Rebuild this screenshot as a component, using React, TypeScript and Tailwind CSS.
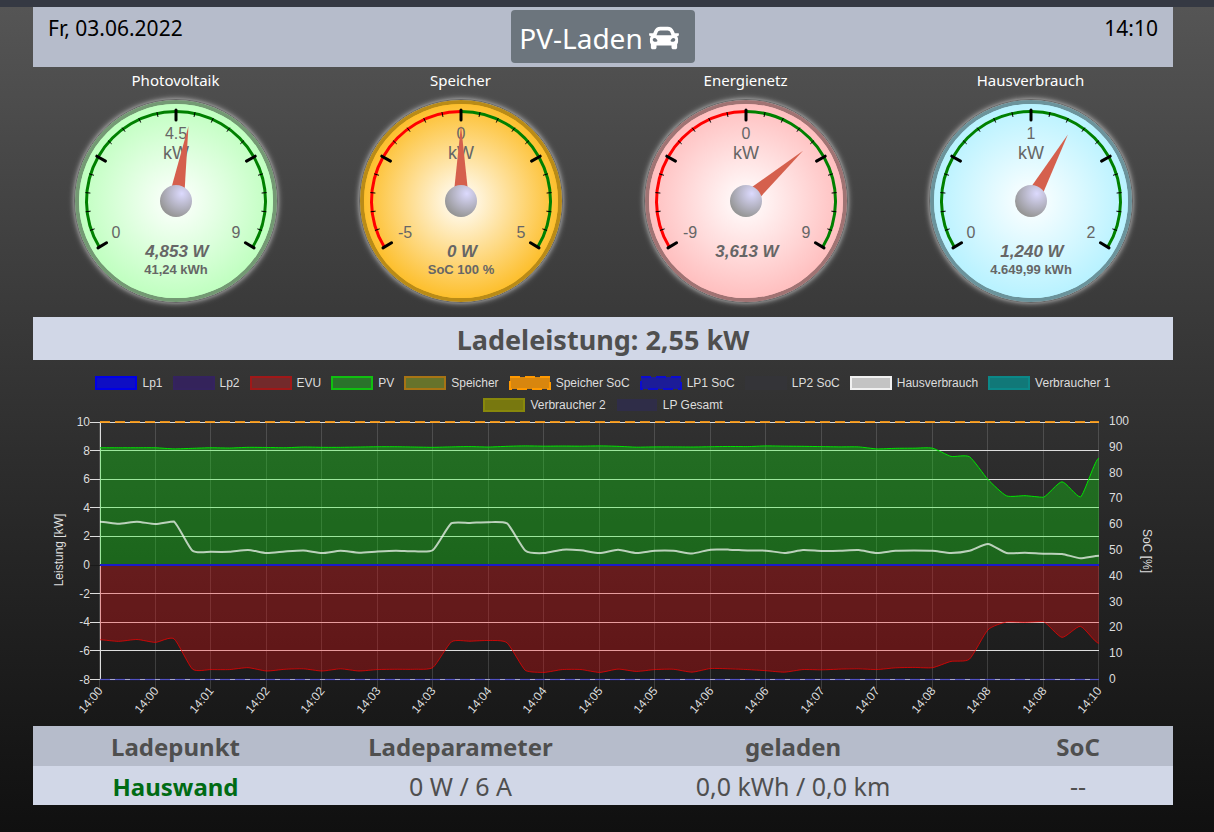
import { FaCar } from "react-icons/fa";

type GaugeProps = {
  title: string;
  min: string;
  mid: string;
  max: string;
  value: string;
  total?: string;
  position: number;
  face: string;
  ring: string;
  signed?: boolean;
};

const gauges: GaugeProps[] = [
  { title: "Photovoltaik", min: "0", mid: "4.5", max: "9", value: "4,853 W", total: "41,24 kWh", position: 0.539, face: "#c0ffc0", ring: "#739973" },
  { title: "Speicher", min: "-5", mid: "0", max: "5", value: "0 W", total: "SoC 100 %", position: 0.5, face: "#fdbf2d", ring: "#b98b17", signed: true },
  { title: "Energienetz", min: "-9", mid: "0", max: "9", value: "3,613 W", position: 0.701, face: "#ffbfbf", ring: "#a07373", signed: true },
  { title: "Hausverbrauch", min: "0", mid: "1", max: "2", value: "1,240 W", total: "4.649,99 kWh", position: 0.62, face: "#b8f2ff", ring: "#6b939b" },
];

const SWEEP = 242;
const CX = 121;
const CY = 110;

function polar(deg: number, r: number) {
  const rad = (deg * Math.PI) / 180;
  return [CX + r * Math.sin(rad), CY - r * Math.cos(rad)];
}

function arc(from: number, to: number, r: number) {
  const [x1, y1] = polar(from, r);
  const [x2, y2] = polar(to, r);
  const large = to - from > 180 ? 1 : 0;
  return `M${x1} ${y1}A${r} ${r} 0 ${large} 1 ${x2} ${y2}`;
}

function Gauge({ title, min, mid, max, value, total, position, face, ring, signed }: GaugeProps) {
  const half = SWEEP / 2;
  const ticks = Array.from({ length: 21 }, (_, i) => i);
  const faceId = `face-${title}`;
  const hubId = `hub-${title}`;
  const glowId = `glow-${title}`;

  return (
    <div className="flex flex-col items-center">
      <h2 className="h-6 pt-px text-[15px] leading-6 text-white">{title}</h2>
      <svg viewBox="0 0 241 226" className="w-full max-w-[241px]" role="img" aria-label={`${title}: ${value}`} fontFamily="Liberation Sans, Arial, sans-serif" fill="#666">
        <defs>
          <radialGradient id={faceId}>
            <stop offset="0" stopColor="#fff" />
            <stop offset="1" stopColor={face} />
          </radialGradient>
          <radialGradient id={hubId} cx="0.68" cy="0.27" r="0.75">
            <stop offset="0" stopColor="#dcdafe" />
            <stop offset="1" stopColor="#969696" />
          </radialGradient>
          <filter id={glowId} x="-20%" y="-20%" width="140%" height="140%">
            <feGaussianBlur stdDeviation="3" />
          </filter>
        </defs>
        <circle cx={CX} cy={CY} r="101" fill="#fff" filter={`url(#${glowId})`} />
        <circle cx={CX} cy={CY} r="101.5" fill="#bbb" stroke="#666" strokeWidth="1" />
        <circle cx={CX} cy={CY} r="101" fill={ring} />
        <circle cx={CX} cy={CY} r="97" fill={face} />
        <circle cx={CX} cy={CY} r="97" fill={`url(#${faceId})`} />
        <g fill="none" strokeWidth="3">
          <path d={arc(-half, 0, 89.5)} stroke={signed ? "#f00" : "#008000"} />
          <path d={arc(0, half, 89.5)} stroke="#008000" />
        </g>
        {ticks.map((i) => {
          const big = i % 5 === 0;
          const deg = -half + (i * SWEEP) / 20;
          const [x1, y1] = polar(deg, big ? 81 : 86);
          const [x2, y2] = polar(deg, 91);
          return <line key={i} x1={x1} y1={y1} x2={x2} y2={y2} stroke="#000" strokeWidth={big ? 3 : 1} strokeLinecap={big ? "round" : "butt"} />;
        })}
        <g textAnchor="middle">
          <text x="121" y="48" fontSize="16">{mid}</text>
          <text x="121" y="68" fontSize="18">kW</text>
          <text x={signed ? 65 : 61} y="147" fontSize="16">{min}</text>
          <text x="181" y="147" fontSize="16">{max}</text>
          <text x="122" y="166" fontSize="17" fontWeight="bold" fontStyle="italic">{value}</text>
          {total && <text x="121" y="183" fontSize="13" fontWeight="bold">{total}</text>}
        </g>
        <path d={`M${CX - 8} ${CY}L${CX} ${CY - 76}L${CX + 8} ${CY}Z`} fill="#d5604d" transform={`rotate(${(position - 0.5) * SWEEP} ${CX} ${CY})`} />
        <circle cx={CX} cy={CY} r="16" fill={`url(#${hubId})`} />
      </svg>
    </div>
  );
}

const legend = [
  { label: "Lp1", fill: "#0e0ec4", stroke: "#0000e6" },
  { label: "Lp2", fill: "#34235b", stroke: "#34235f" },
  { label: "EVU", fill: "#732a2b", stroke: "#a01818" },
  { label: "PV", fill: "#2a732b", stroke: "#10c010" },
  { label: "Speicher", fill: "#66732b", stroke: "#a87414" },
  { label: "Speicher SoC", fill: "#d8860e", stroke: "#ff9900", dashed: true },
  { label: "LP1 SoC", fill: "#1c1c98", stroke: "#0c0cd0", dashed: true },
  { label: "LP2 SoC", fill: "#343438", stroke: "#343438" },
  { label: "Hausverbrauch", fill: "#c3c3c3", stroke: "#f0f0f0" },
  { label: "Verbraucher 1", fill: "#117878", stroke: "#0b8888" },
  { label: "Verbraucher 2", fill: "#78780f", stroke: "#88880b" },
  { label: "LP Gesamt", fill: "#2f2d48", stroke: "none" },
];

const times = [
  "14:00", "14:00", "14:01", "14:02", "14:02", "14:03", "14:03", "14:04", "14:04", "14:05",
  "14:05", "14:06", "14:06", "14:07", "14:07", "14:08", "14:08", "14:08", "14:10",
];

const pv = [
  8.2, 8.2, 8.2, 8.2, 8.12, 8.16, 8.2, 8.18, 8.23, 8.22, 8.2, 8.25, 8.23, 8.23, 8.25, 8.27, 8.27, 8.25, 8.23,
  8.26, 8.28, 8.25, 8.3, 8.33, 8.31, 8.32, 8.31, 8.33, 8.3, 8.24, 8.26, 8.26, 8.25, 8.27, 8.29, 8.28, 8.33,
  8.31, 8.3, 8.28, 8.26, 8.26, 8.12, 8.16, 8.17, 8.17, 7.6, 7.57, 5.98, 4.84, 4.85, 4.74, 5.82, 4.76, 7.48,
];

const house = [
  3.03, 2.89, 3.03, 2.87, 3.05, 1.0, 0.93, 0.93, 1.06, 0.84, 0.95, 1.02, 0.84, 1.0, 0.87, 0.95, 1.0, 0.96, 1.06,
  2.93, 2.95, 3.0, 2.92, 1.0, 0.84, 1.08, 1.03, 0.84, 1.07, 0.85, 1.0, 1.0, 0.81, 1.08, 1.08, 1.02, 1.01,
  0.85, 1.05, 0.99, 1.0, 1.05, 0.85, 1.0, 1.02, 1.0, 0.85, 1.0, 1.47, 0.84, 0.86, 0.8, 0.78, 0.48, 0.66,
];

const evu = [
  -5.22, -5.33, -5.2, -5.4, -5.15, -7.27, -7.3, -7.3, -7.17, -7.4, -7.28, -7.25, -7.4, -7.25, -7.4, -7.3, -7.28, -7.28, -7.15,
  -5.36, -5.32, -5.27, -5.43, -7.37, -7.5, -7.3, -7.3, -7.5, -7.27, -7.43, -7.3, -7.28, -7.48, -7.23, -7.25, -7.3, -7.38,
  -7.48, -7.3, -7.32, -7.27, -7.25, -7.3, -7.18, -7.15, -7.17, -6.73, -6.57, -4.52, -3.98, -4.0, -3.95, -5.05, -4.28, -5.47,
];

const LEFT = 67;
const RIGHT = 1066;
const BOTTOM = 267.5;
const xAt = (i: number) => LEFT + ((RIGHT - LEFT) * i) / 54;
const yAt = (kw: number) => 10 + (10 - kw) * 14.31;
const crisp = (n: number) => Math.floor(n) + 0.5;

// cubic segments with a low tension, so steps keep their corners
function smooth(values: number[]) {
  const top = Math.min(...values.map(yAt));
  const bottom = Math.max(...values.map(yAt));
  const clamp = (y: number) => Math.min(Math.max(y, top), bottom);
  const slope = (i: number) => {
    if (i === 0 || i === values.length - 1) return 0;
    return (yAt(values[i + 1]) - yAt(values[i - 1])) * 0.1;
  };
  const dx = (xAt(1) - xAt(0)) * 0.2;
  return values.reduce((d, v, i) => {
    if (i === 0) return `M${xAt(0)} ${yAt(v)}`;
    const y1 = clamp(yAt(values[i - 1]) + slope(i - 1));
    const y2 = clamp(yAt(v) - slope(i));
    return `${d}C${xAt(i - 1) + dx} ${y1} ${xAt(i) - dx} ${y2} ${xAt(i)} ${yAt(v)}`;
  }, "");
}

const area = (values: number[]) => `${smooth(values)}L${RIGHT} ${yAt(0)}L${LEFT} ${yAt(0)}Z`;

function PowerChart() {
  const kw = [10, 8, 6, 4, 2, 0, -2, -4, -6, -8];
  const soc = [100, 90, 80, 70, 60, 50, 40, 30, 20, 10, 0];

  return (
    <section className="pt-4">
      <ul className="flex flex-wrap justify-center gap-x-[10px] gap-y-2 px-8">
        {legend.map((l) => (
          <li key={l.label} className="flex items-center gap-[5px] h-[14px] text-xs text-[#ddd] whitespace-nowrap font-['Liberation_Sans',Arial,sans-serif]">
            <svg width="42" height="14" aria-hidden="true">
              <rect x="1" y="1" width="40" height="12" fill={l.fill} stroke={l.stroke} strokeWidth="2" strokeDasharray={l.dashed ? "10 5" : undefined} />
            </svg>
            {l.label}
          </li>
        ))}
      </ul>
      <svg viewBox="0 0 1140 314" className="block w-full" role="img" aria-label="Leistungsverlauf" fontFamily="Liberation Sans, Arial, sans-serif" fontSize="12" fill="#ddd">
        {times.map((t, i) => {
          const x = crisp(xAt(i * 3) - 0.5);
          return (
            <g key={i}>
              <line x1={x} x2={x} y1="10" y2="277" stroke="#fff" strokeOpacity="0.15" />
              <text transform={`translate(${x} 276) rotate(-50)`} textAnchor="end" dy="5">{t}</text>
            </g>
          );
        })}
        {kw.map((v) => (
          <g key={v}>
            <line x1="57" x2={RIGHT} y1={crisp(yAt(v))} y2={crisp(yAt(v))} stroke={v === 0 ? "#1a1a1a" : "#ddd"} />
            <text x="57" y={yAt(v) + 4} textAnchor="end">{v}</text>
          </g>
        ))}
        <line x1="67.5" x2="67.5" y1="10" y2="268" stroke="#ddd" />
        {soc.map((v) => (
          <text key={v} x="1076" y={13 + (100 - v) * 2.58}>{v}</text>
        ))}
        <text transform="translate(30 138) rotate(-90)" textAnchor="middle">Leistung [kW]</text>
        <text transform="translate(1110 139) rotate(90)" textAnchor="middle">SoC [%]</text>

        <path d={area(evu)} fill="#ff0a0d" fillOpacity="0.3" />
        <path d={smooth(evu)} fill="none" stroke="#ff0000" strokeOpacity="0.7" />
        <path d={area(pv)} fill="#0aff0a" fillOpacity="0.3" />
        <path d={smooth(pv)} fill="none" stroke="#00e600" />
        <path d={smooth(house)} fill="none" stroke="#fff" strokeOpacity="0.7" strokeWidth="2" />
        <line x1={LEFT} x2={RIGHT} y1="153" y2="153" stroke="#1a1ac8" strokeWidth="2" />
        <line x1={LEFT} x2={RIGHT} y1="10" y2="10" stroke="#ff9f1a" strokeOpacity="0.9" strokeWidth="2" strokeDasharray="10 5" />
        <line x1={LEFT} x2={RIGHT} y1={BOTTOM} y2={BOTTOM} stroke="#2a2a9a" strokeOpacity="0.3" strokeWidth="2" />
        <line x1={LEFT} x2={RIGHT} y1={BOTTOM} y2={BOTTOM} stroke="#5050c0" strokeDasharray="10 5" />
      </svg>
    </section>
  );
}

export default function App() {
  return (
    <div className="min-h-screen border-t-[7px] border-[#353943] bg-linear-to-b from-[#555] to-[#101010] pr-2 font-['Noto_Sans','Open_Sans',sans-serif]">
      <main className="max-w-[1140px] mx-auto">
        <header className="grid grid-cols-3 h-[60px] bg-[#b6bccb] px-[15px] text-[21px] text-black">
          <time dateTime="2022-06-03" className="pt-1.5 leading-[31px]">Fr, 03.06.2022</time>
          <div className="flex justify-center items-start pt-[3px]">
            <button type="button" className="flex items-center gap-1.5 h-[53px] pl-2 pr-4 pt-0.5 rounded bg-[#6c757d] text-[28px] leading-none text-white whitespace-nowrap">
              PV-Laden <FaCar className="size-[30px]" />
            </button>
          </div>
          <time dateTime="14:10" className="pt-1.5 leading-[31px] text-right">14:10</time>
        </header>

        <section className="grid grid-cols-4">
          {gauges.map((g) => (
            <Gauge key={g.title} {...g} />
          ))}
        </section>

        <h1 className="h-[43px] leading-[45px] bg-[#d1d7e7] text-center text-[27px] font-bold text-[#4f4f4f]">
          Ladeleistung: 2,55 kW
        </h1>

        <PowerChart />

        <table className="w-full table-fixed text-center text-[24px] text-[#4f4f4f]">
          <thead>
            <tr className="h-10 bg-[#b6bccb] leading-[38px]">
              <th className="w-1/4 p-0 pt-0.5 font-bold">Ladepunkt</th>
              <th className="w-1/4 p-0 pt-0.5 font-bold">Ladeparameter</th>
              <th className="w-1/3 p-0 pt-0.5 font-bold">geladen</th>
              <th className="w-1/6 p-0 pt-0.5 font-bold">SoC</th>
            </tr>
          </thead>
          <tbody>
            <tr className="h-[39px] bg-[#d1d7e7] leading-[37px]">
              <td className="p-0 pt-0.5 font-bold text-[#006b14]">Hauswand</td>
              <td className="p-0 pt-0.5 text-[25px]">0 W / 6 A</td>
              <td className="p-0 pt-0.5 text-[25px]">0,0 kWh / 0,0 km</td>
              <td className="p-0 pt-0.5 text-[25px]">--</td>
            </tr>
          </tbody>
        </table>
      </main>
    </div>
  );
}
